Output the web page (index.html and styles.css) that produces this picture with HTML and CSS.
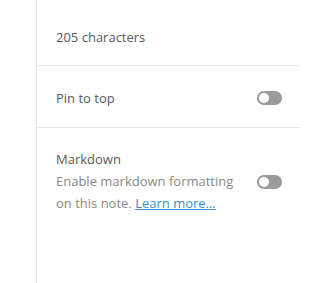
FILE: index.html
```html
<!DOCTYPE html>
<html>
<head>
<meta charset="utf-8">
<link rel="stylesheet" href="styles.css">
</head>
<body>
<div class="panel">
  <div class="row row-count">
    <span class="label">205 characters</span>
  </div>
  <div class="row row-pin">
    <span class="label">Pin to top</span>
    <span class="toggle"><span class="knob"></span></span>
  </div>
  <div class="row row-md">
    <div class="md-text">
      <div class="label">Markdown</div>
      <div class="desc">Enable markdown formatting<br>on this note. <a href="#" class="link">Learn more…</a></div>
    </div>
    <span class="toggle"><span class="knob"></span></span>
  </div>
</div>
</body>
</html>
```

FILE: styles.css
```css
html, body {
  margin: 0;
  padding: 0;
  background: #fff;
}
body {
  width: 300px;
  font-family: "Open Sans", "Noto Sans", sans-serif;
  font-size: 13px;
  color: #555;
}
.panel {
  margin-left: 36px;
  width: 264px;
  border-left: 1px solid #e4e4e4;
  height: 283px;
  box-sizing: border-box;
}
.row {
  display: flex;
  align-items: center;
  justify-content: space-between;
  padding: 0 18px 0 19px;
  border-bottom: 1px solid #e6e6e6;
}
.row-count {
  height: 66px;
  padding-top: 8px;
  box-sizing: border-box;
}
.row-pin {
  height: 62px;
  padding-top: 2px;
  box-sizing: border-box;
}
.row-md {
  border-bottom: none;
  align-items: flex-start;
  padding-top: 20px;
}
.label {
  color: #5a5a5a;
  line-height: 22px;
}
.desc {
  color: #8a8a8a;
  line-height: 22px;
}
.link {
  color: #3a8dd0;
  text-decoration: underline;
}
.toggle {
  width: 25px;
  height: 14px;
  border-radius: 7px;
  background: #9b9b9b;
  position: relative;
  flex: none;
}
.row-md .toggle {
  margin-top: 27px;
}
.knob {
  position: absolute;
  left: 2px;
  top: 2px;
  width: 10px;
  height: 10px;
  border-radius: 50%;
  background: #fff;
}
```
